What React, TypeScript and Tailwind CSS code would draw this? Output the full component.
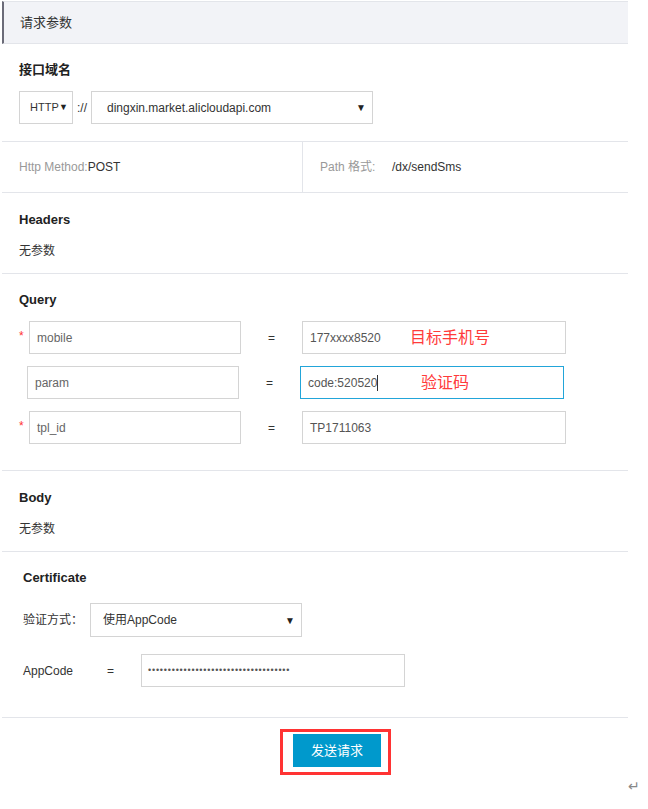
import React from "react";

const font = { fontFamily: '"Liberation Sans", "Noto Sans CJK SC", sans-serif' };

const Arrow = () => <span className="text-[10px] text-[#222]">▼</span>;

const QueryRow = ({
  name,
  value,
  required,
  focused,
  note,
  shift,
}: {
  name: string;
  value: string;
  required?: boolean;
  focused?: boolean;
  note?: string;
  shift?: boolean;
}) => (
  <div className={`flex items-center h-[33px] ${shift ? "pl-[17px]" : "pl-[19px]"}`}>
    <span className="w-[10px] self-start pt-[9px] text-[12px] leading-none text-[#ff3333]">
      {required ? "*" : ""}
    </span>
    <div className="w-[212px] h-full border-[1.5px] border-[#d4d4d4] flex items-center pl-[7px] text-[12px] text-[#666]">
      {name}
    </div>
    <div className="w-[61px] text-center text-[12px] text-[#333]">=</div>
    <div
      className={`relative w-[264px] h-full flex items-center pl-[7px] text-[12px] text-[#555] ${
        focused ? "border-[1.5px] border-[#22a5d9]" : "border-[1.5px] border-[#d4d4d4]"
      }`}
    >
      {value}
      {focused && <span className="w-px h-[16px] bg-[#333]" />}
      {note && (
        <span
          className={`absolute top-1/2 -translate-y-1/2 text-[16px] text-[#ff3b3b] ${
            focused ? "left-[120px]" : "left-[107px]"
          }`}
        >
          {note}
        </span>
      )}
    </div>
  </div>
);

const Section = ({ title, children }: { title: string; children: React.ReactNode }) => (
  <div className="border-b border-[#e3e5ea] px-[17px] pt-[18px]">
    <div className="text-[13px] font-bold leading-[18px] text-[#222]">{title}</div>
    {children}
  </div>
);

export default function App() {
  return (
    <div className="min-h-[809px] bg-white relative" style={font}>
      <div className="w-[626px] ml-[2px]">
        <div className="h-[43px] mt-[1px] bg-[#f2f3f7] border-t border-b border-[#e3e5ea] border-l-2 border-l-[#6b6b78] flex items-center pl-[16px] text-[13px] text-[#333]">
          请求参数
        </div>

        <div className="px-[17px] pt-[17px] pb-[17px]">
          <div className="text-[13px] font-bold leading-[18px] text-[#222]">接口域名</div>
          <div className="flex items-center mt-[12px] h-[33px]">
            <div className="w-[54px] h-full border-[1.5px] border-[#d4d4d4] flex items-center justify-between pl-[10px] pr-[4px] text-[11px] text-[#333]">
              HTTP
              <span className="text-[9px] text-[#222]">▼</span>
            </div>
            <span className="w-[18px] text-center text-[12px] text-[#333]">://</span>
            <div className="w-[282px] h-full border-[1.5px] border-[#d4d4d4] flex items-center justify-between pl-[15px] pr-[6px] text-[12px] text-[#333]">
              dingxin.market.alicloudapi.com
              <Arrow />
            </div>
          </div>
        </div>

        <div className="flex h-[52px] border-t border-b border-[#e3e5ea] text-[12px]">
          <div className="w-[301px] border-r border-[#e3e5ea] flex items-center pl-[17px]">
            <span className="text-[#999]">Http Method:</span>
            <span className="text-[#333]">POST</span>
          </div>
          <div className="flex items-center pl-[17px]">
            <span className="text-[#999] w-[72px]">Path 格式:</span>
            <span className="text-[#333]">/dx/sendSms</span>
          </div>
        </div>

        <Section title="Headers">
          <div className="mt-[13px] pb-[13px] text-[12px] leading-[18px] text-[#333]">无参数</div>
        </Section>

        <div className="border-b border-[#e3e5ea] pt-[17px] pb-[26px]">
          <div className="px-[17px] text-[13px] font-bold leading-[18px] text-[#222]">Query</div>
          <div className="mt-[12px] flex flex-col gap-[12px] -ml-[2px]">
            <QueryRow name="mobile" value="177xxxx8520" required note="目标手机号" />
            <QueryRow name="param" value="code:520520" focused note="验证码" shift />
            <QueryRow name="tpl_id" value="TP1711063" required />
          </div>
        </div>

        <Section title="Body">
          <div className="mt-[13px] pb-[13px] text-[12px] leading-[18px] text-[#333]">无参数</div>
        </Section>

        <div className="border-b border-[#e3e5ea] pl-[21px] pt-[17px] pb-[30px]">
          <div className="text-[13px] font-bold leading-[18px] text-[#222]">Certificate</div>
          <div className="flex items-center mt-[16px] h-[34px]">
            <span className="w-[67px] text-[12px] text-[#333]">验证方式：</span>
            <div className="w-[212px] h-full border-[1.5px] border-[#d4d4d4] flex items-center justify-between pl-[12px] pr-[6px] text-[12px] text-[#333]">
              使用AppCode
              <Arrow />
            </div>
          </div>
          <div className="flex items-center mt-[17px] h-[33px]">
            <span className="w-[84px] text-[12px] text-[#333]">AppCode</span>
            <span className="w-[34px] text-[12px] text-[#333]">=</span>
            <div className="w-[264px] h-full border-[1.5px] border-[#d4d4d4] flex items-center pl-[6px] text-[9px] tracking-[0.8px] text-[#555]">
              ••••••••••••••••••••••••••••••••••••
            </div>
          </div>
        </div>

        <div className="pt-[11px]">
          <div className="ml-[278px] w-[111px] h-[46px] border-[3px] border-[#ff3333] pl-[10px] pt-[2px]">
            <button className="w-[88px] h-[33px] bg-[#0099cc] text-white text-[13px]">发送请求</button>
          </div>
        </div>
      </div>
      <span className="absolute left-[628px] top-[775px] text-[14px] text-[#888]">↵</span>
    </div>
  );
}
